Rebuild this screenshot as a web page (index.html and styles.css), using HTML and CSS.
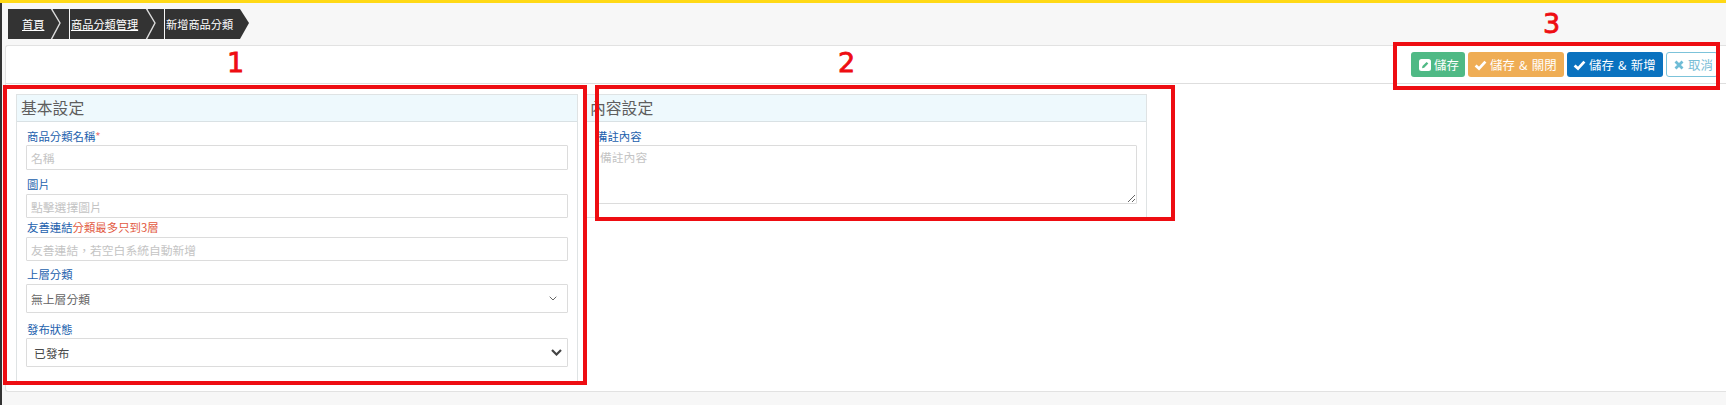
FILE: index.html
```html
<!DOCTYPE html>
<html lang="zh-Hant">
<head>
<meta charset="utf-8">
<title>新增商品分類</title>
<link rel="stylesheet" href="styles.css">
</head>
<body>
<div class="topbar"></div>
<div class="shell">
  <div class="strip"></div>
  <main class="main">
    <nav class="crumbs">
      <a class="crumb crumb-home" href="#">首頁</a>
      <svg class="tail" width="19" height="30" viewBox="0 0 19 30"><rect width="19" height="30" fill="#333"/><polygon points="0,0 3,0 3,1 0,-1" fill="#f7f7f7"/><polyline points="1,-1 10,14 1,31" fill="none" stroke="#dcdcdc" stroke-width="1.4"/></svg>
      <a class="crumb crumb-mid" href="#">商品分類管理</a>
      <svg class="tail" width="19" height="30" viewBox="0 0 19 30"><rect width="19" height="30" fill="#333"/><polygon points="0,0 3,0 3,1 0,-1" fill="#f7f7f7"/><polyline points="1,-1 10,14 1,31" fill="none" stroke="#dcdcdc" stroke-width="1.4"/></svg>
      <span class="crumb crumb-last">新增商品分類</span>
      <svg class="tip" width="9" height="30" viewBox="0 0 9 30"><polygon points="0,0 9,14 0,30" fill="#333"/></svg>
    </nav>
    <section class="card">
      <div class="toolbar">
        <button class="btn btn-green" type="button">
          <svg class="icon" width="12" height="12" viewBox="0 0 12 12"><rect width="12" height="12" rx="2.5" fill="#fff"/><path d="M3 9.2 3.5 7 7.6 2.9 9.3 4.6 5.2 8.7Z" fill="#4fb985"/></svg>
          <span>儲存</span>
        </button>
        <button class="btn btn-orange" type="button">
          <svg class="icon" width="13" height="12" viewBox="0 0 13 12"><path d="M1.6 6.4 5 9.6 11.4 2.6" fill="none" stroke="#fff" stroke-width="2.8"/></svg>
          <span>儲存 &amp; 關閉</span>
        </button>
        <button class="btn btn-blue" type="button">
          <svg class="icon" width="13" height="12" viewBox="0 0 13 12"><path d="M1.6 6.4 5 9.6 11.4 2.6" fill="none" stroke="#fff" stroke-width="2.8"/></svg>
          <span>儲存 &amp; 新增</span>
        </button>
        <button class="btn btn-cancel" type="button">
          <svg class="icon" width="10" height="10" viewBox="0 0 10 10"><path d="M1.5 1.5 8.5 8.5M8.5 1.5 1.5 8.5" fill="none" stroke="#6fbcd6" stroke-width="2.8"/></svg>
          <span>取消</span>
        </button>
      </div>
      <div class="panels">
        <div class="panel">
          <h2 class="panel-head">基本設定</h2>
          <div class="panel-body">
            <label class="label">商品分類名稱<span class="req">*</span></label>
            <input class="control h25" type="text" placeholder="名稱">
            <label class="label label-image">圖片</label>
            <input class="control h24" type="text" placeholder="點擊選擇圖片">
            <label class="label label-link">友善連結<span class="note">分類最多只到3層</span></label>
            <input class="control h24" type="text" placeholder="友善連結，若空白系統自動新增">
            <label class="label label-parent">上層分類</label>
            <div class="select">
              <span>無上層分類</span>
              <svg width="8" height="5" viewBox="0 0 8 5"><path d="M.7.7 4 4 7.3.7" fill="none" stroke="#666" stroke-width="1"/></svg>
            </div>
            <label class="label label-status">發布狀態</label>
            <div class="select select-strong">
              <span>已發布</span>
              <svg width="11" height="7" viewBox="0 0 11 7"><path d="M1 1 5.5 5.5 10 1" fill="none" stroke="#444" stroke-width="2.2"/></svg>
            </div>
          </div>
        </div>
        <div class="panel panel-content">
          <h2 class="panel-head">內容設定</h2>
          <div class="panel-body">
            <label class="label">備註內容</label>
            <textarea class="control area" placeholder="備註內容"></textarea>
          </div>
        </div>
      </div>
    </section>
  </main>
</div>
<div class="mark box-1"></div>
<div class="mark box-2"></div>
<div class="mark box-3"></div>
<div class="num num-1">1</div>
<div class="num num-2">2</div>
<div class="num num-3">3</div>
</body>
</html>
```
FILE: styles.css
```css
* { box-sizing: border-box; }
html, body { margin: 0; height: 405px; overflow: hidden; }
body {
  position: relative;
  background: #f7f7f7;
  font-family: "Noto Sans CJK TC", "Liberation Sans", sans-serif;
  font-size: 11.4px;
  color: #444;
}
.topbar { height: 3px; background: #ffd916; }
.shell { display: flex; height: 402px; }
.strip { width: 2px; background: #333; flex: none; }
.main { flex: 1; min-width: 0; }

.crumbs { display: flex; align-items: stretch; height: 30px; margin: 6px 0 0 6px; }
.crumb {
  display: flex; align-items: center;
  height: 30px; background: #333; color: #fff; font-size: 11.2px; white-space: nowrap;
}
.crumb-home { width: 42px; padding-left: 14px; }
.crumb-mid { width: 75px; margin-left: 1px; padding-left: 1px; }
.crumb-last { width: 75px; margin-left: 1px; padding-left: 1px; }
.tail, .tip { display: block; flex: none; }

.card {
  margin: 6px 0 0 3px;
  height: 347px;
  background: #fff;
  border: 1px solid #e2e2e2;
  border-right: 0;
  border-radius: 3px 0 0 3px;
}
.toolbar {
  display: flex; justify-content: flex-end; gap: 3px;
  height: 38px; padding: 6px 8px 0 0;
  border-bottom: 1px solid #dedede;
}
.btn {
  display: flex; align-items: center; gap: 3px;
  height: 25px; padding: 0 6px; border: 0; border-radius: 3px;
  color: #fff; font: inherit; font-size: 12.4px; word-spacing: 1.5px; white-space: nowrap;
}
.btn-green { background: #4fb985; padding-left: 8px; width: 54px; }
.btn-orange { background: #efad55; width: 96px; }
.btn-blue { background: #0a72bf; width: 96px; }
.btn-cancel { background: #fff; border: 1px solid #7cc3da; color: #79bdd6; padding-left: 7px; width: 52px; gap: 4px; }
.icon { flex: none; }

.panels { display: flex; align-items: flex-start; gap: 7px; padding: 10px 0 0 10px; }
.panel { width: 562px; border: 1px solid #dfe3e4; }
.panel-head {
  margin: 0; height: 27px; padding: 0 4px;
  background: #eef9fd; border-bottom: 1px solid #d9e1e4;
  font-size: 15.8px; font-weight: 400; line-height: 26px; color: #5e5e5e;
}
.panel-body { padding: 7px 9px 14px; }
.panel-content .panel-body { padding-bottom: 13px; }
.label { display: block; height: 14px; line-height: 14px; margin: 0 0 2px; padding-left: 1px; color: #2361ad; font-size: 11.4px; }
.label-image { margin: 7px 0 3px; }
.label-link { margin: 2px 0 3px; }
.label-parent { margin: 6px 0 3px; }
.label-status { margin-top: 9px; }
.req { color: #ee7777; }
.note { color: #e2583e; }
.control {
  display: block; width: 100%; margin: 0; padding: 0 4px;
  background: #fff; border: 1px solid #dcdcdc; border-radius: 1px;
  font: inherit; font-size: 11.8px; color: #444; outline: 0;
}
.control::placeholder { color: #c4c4c4; opacity: 1; }
.h25 { height: 25px; }
.h24 { height: 24px; }
.area { height: 59px; padding-top: 2px; resize: vertical; }
.select {
  display: flex; align-items: center; justify-content: space-between;
  height: 29px; padding: 0 10px 0 4px;
  border: 1px solid #dcdcdc; border-radius: 1px; color: #666; font-size: 11.8px;
}
.select-strong { padding: 0 5px 0 7px; color: #4a4a4a; }

.mark { position: absolute; border: 4px solid #ee0d12; pointer-events: none; }
.box-1 { left: 3px; top: 85px; width: 584px; height: 300px; }
.box-2 { left: 595px; top: 85px; width: 580px; height: 136px; }
.box-3 { left: 1393px; top: 42px; width: 327px; height: 48px; }
.num {
  position: absolute; color: #ee0d12;
  font-family: "DejaVu Sans", sans-serif; font-size: 27px; line-height: 30px;
  -webkit-text-stroke: 0.8px #ee0d12;
}
.num-1 { left: 227px; top: 48px; }
.num-2 { left: 838px; top: 48px; }
.num-3 { left: 1543px; top: 9px; }
```
